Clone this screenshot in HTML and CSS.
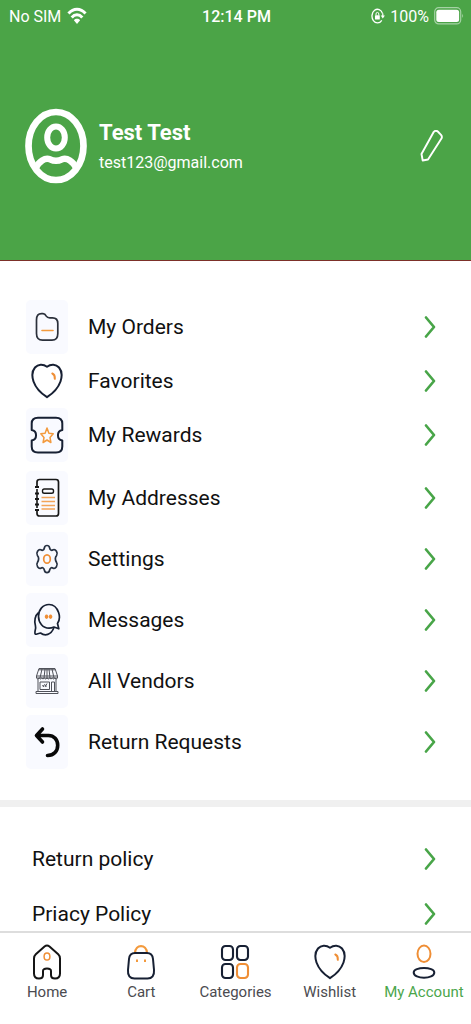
FILE: index.html
```html
<!DOCTYPE html>
<html lang="en">
<head>
<meta charset="utf-8">
<meta name="viewport" content="width=device-width, initial-scale=1">
<title>My Account</title>
<link rel="stylesheet" href="styles.css">
</head>
<body>
<svg class="defs" aria-hidden="true">
  <symbol id="chevron" viewBox="0 0 14 26"><path d="M3 3.500L11 13L3 22.500" fill="none" stroke="#48a548" stroke-width="2.700" stroke-linecap="round" stroke-linejoin="round"/></symbol>
  <symbol id="heart" viewBox="0 0 32 36"><path d="M16 3.800C12 .8 7 1.200 4 4.500C.8 8.300 1 14 2.500 18.500C5 25.500 11 31 16 34.200C21 31 27 25.500 29.500 18.500C31 14 31.200 8.300 28 4.500C25 1.200 20 .8 16 3.800Z" fill="none" stroke="#172033" stroke-width="2" stroke-linejoin="round"/><path d="M21.300 10.500C23.100 11.300 24 13.500 23.800 15.800" fill="none" stroke="#ef8e35" stroke-width="2" stroke-linecap="round"/></symbol>
</svg>
<header class="header">
  <div class="status">
    <div class="status-side">
      <span>No SIM</span>
      <svg class="wifi" viewBox="0 0 20 18" width="20" height="18"><g fill="none" stroke="#fff" stroke-width="3"><path d="M1.500 6.500C6.500.8 13.500.8 18.500 6.500"/><path d="M4.700 10.400C7.800 7 12.200 7 15.300 10.400"/></g><path d="M6.900 13.200C8.500 11.300 11.500 11.300 13.100 13.200L10 17Z" fill="#fff"/></svg>
    </div>
    <time class="clock">12:14 PM</time>
    <div class="status-side status-end">
      <svg viewBox="0 0 14 16" width="14" height="16"><path d="M10.800 12.300A5.500 6.800 0 1 1 11.600 5.600" fill="none" stroke="#fff" stroke-width="1.300"/><path d="M11.800 5.500V8.400" stroke="#fff" stroke-width="1.200"/><path d="M9.700 7.500H13.900L11.800 10.600Z" fill="#fff"/><rect x="4" y="7.200" width="4.800" height="4.400" rx=".6" fill="#fff"/><path d="M5 7.400V6A1.400 1.600 0 0 1 7.800 6V7.400" fill="none" stroke="#fff"/></svg>
      <span>100%</span>
      <svg class="battery" viewBox="0 0 30 18" width="30" height="18"><rect x=".7" y=".7" width="26" height="16.200" rx="4" fill="none" stroke="#a5d2a5" stroke-width="1.200"/><rect x="2.300" y="2.700" width="22.800" height="12.200" rx="2.500" fill="#fff"/><path d="M28.200 6.500Q30 8.800 28.200 11Z" fill="#a5d2a5"/></svg>
    </div>
  </div>
  <div class="profile">
    <svg class="avatar" viewBox="0 0 62 76" width="62" height="76"><g fill="none" stroke="#fff"><ellipse cx="31" cy="38" rx="27.500" ry="34" stroke-width="6.700"/><ellipse cx="31" cy="29.500" rx="8.800" ry="11" stroke-width="6"/><path d="M10.500 60.500C14 53 20 49.500 25 51.300C29 53.300 33 53.300 37 51.300C42 49.500 48 53 51.500 60.500" stroke-width="6.500"/></g></svg>
    <div class="who">
      <h1 class="name">Test Test</h1>
      <p class="email">test123@gmail.com</p>
    </div>
    <button class="edit" type="button" aria-label="Edit profile"><svg viewBox="0 0 24 32" width="24" height="32"><path d="M13.800 1.800Q15.700-.1 17.800 1.500L21 4.800Q22.600 6.700 21.300 8.800L8 29.500L2.700 30.500L1.500 24L13.800 1.800Z" fill="none" stroke="#fff" stroke-width="1.900" stroke-linejoin="round"/></svg></button>
  </div>
</header>
<main>
  <ul class="menu">
    <li><a class="row" href="#orders"><span class="tile"><svg viewBox="0 0 24 30" width="24" height="30"><path d="M1.500 8C1.500 3.500 3.500 1.700 6.500 1.700H8C10 1.700 10.500 2.700 11.300 4.200C12.200 5.800 13 5.900 14.800 5.900H17.500C21 5.900 22.800 7.800 22.800 11.500V21.500C22.800 26 21 28.200 17 28.200H7.500C3.500 28.200 1.500 26 1.500 21.500Z" fill="none" stroke="#2b303b" stroke-width="1.700"/><path d="M7 18.500H18" stroke="#f39a3d" stroke-width="1.600" stroke-linecap="round"/></svg></span><span class="label">My Orders</span><svg class="go"><use href="#chevron"/></svg></a></li>
    <li><a class="row" href="#favorites"><span class="tile tile-plain"><svg width="32" height="36"><use href="#heart"/></svg></span><span class="label">Favorites</span><svg class="go"><use href="#chevron"/></svg></a></li>
    <li class="group-end"><a class="row" href="#rewards"><span class="tile"><svg viewBox="0 0 34 38" width="34" height="38"><path d="M1.700 14V7.500C1.700 3.500 4 1.700 8 1.700H26C30 1.700 32.300 3.500 32.300 7.500V14C26.500 15 26.500 23.500 32.300 24.500V30.500C32.300 34.500 30 36.500 26 36.500H8C4 36.500 1.700 34.500 1.700 30.500V24.500C7.500 23.500 7.500 15 1.700 14Z" fill="none" stroke="#172033" stroke-width="2" stroke-linejoin="round"/><path d="M17 12L18.900 17.200L23.200 17.800L20 21.500L20.900 26.500L17 24L13.100 26.500L14 21.500L10.800 17.800L15.100 17.200Z" fill="none" stroke="#f39a3d" stroke-width="1.500" stroke-linejoin="round"/></svg></span><span class="label">My Rewards</span><svg class="go"><use href="#chevron"/></svg></a></li>
    <li><a class="row" href="#addresses"><span class="tile"><svg viewBox="0 0 26 40" width="26" height="40"><path d="M3 8V4Q3 1.500 5.500 1.500H22Q24.500 1.500 24.500 4V35.500Q24.500 38 22 38H5.500Q3 38 3 35.500V33" fill="none" stroke="#171717" stroke-width="1.700"/><path d="M3 11V30" stroke="#171717" stroke-width="1.600"/><path d="M1 9H5M1 15.500H5M1 21H5M1 26.500H5M1 32H5" stroke="#171717" stroke-width="2"/><rect x="8.500" y="11" width="11" height="4.200" rx="1.800" fill="none" stroke="#171717" stroke-width="1.400"/><path d="M7.500 19.500H21M7.500 23.500H21M7.500 27.500H21M7.500 31H21" stroke="#f3a458" stroke-width="1.400"/></svg></span><span class="label">My Addresses</span><svg class="go"><use href="#chevron"/></svg></a></li>
    <li><a class="row" href="#settings"><span class="tile"><svg viewBox="0 0 24 30" width="24" height="30"><path d="M9.500 3.500C10 .8 14 .8 14.500 3.500C15 6.300 16.500 6.800 18.200 5.800C20.500 4.700 23.400 9 21.600 11.500C20 13.500 20 16 21.600 18.500C23.400 21 20.500 25.300 18.200 24.200C16.500 23.200 15 23.700 14.500 26.500C14 29.200 10 29.200 9.500 26.500C9 23.700 7.500 23.200 5.800 24.200C3.500 25.300 .6 21 2.400 18.500C4 16 4 13.500 2.400 11.500C.6 9 3.500 4.700 5.800 5.800C7.500 6.800 9 6.300 9.500 3.500Z" fill="none" stroke="#263041" stroke-width="1.700"/><ellipse cx="12" cy="15" rx="3.300" ry="4.200" fill="none" stroke="#ef8e35" stroke-width="1.700"/></svg></span><span class="label">Settings</span><svg class="go"><use href="#chevron"/></svg></a></li>
    <li><a class="row" href="#messages"><span class="tile"><svg viewBox="0 0 28 34" width="28" height="34"><g fill="none" stroke="#172033" stroke-width="1.700" stroke-linejoin="round"><path d="M24.500 20.500C26.500 17.500 26.800 13 25.600 9.500C23.800 4.300 20 1.500 16 1.500C10 1.500 5.500 6.700 5.500 13.300C5.500 20 10 25.200 16 25.200C18 25.200 19.500 24.700 21 24L25.800 25.800Z"/><path d="M5.700 9.500C2 12.500 1 18 2.400 22.500C3 24.300 2.900 25.500 2 28.500C1.600 31 2.200 31.600 4 31L7.500 30C12 33.300 18 32.200 21 24.500"/></g><path d="M13.500 11.500a1.800 2.200 0 1 0 .1 0zM17.500 11.500a1.800 2.200 0 1 0 .1 0z" fill="#ef8e35"/></svg></span><span class="label">Messages</span><svg class="go"><use href="#chevron"/></svg></a></li>
    <li><a class="row" href="#vendors"><span class="tile"><svg viewBox="0 0 24 28" width="24" height="28"><g fill="none" stroke="#50525a" stroke-width="1"><path d="M4 1.500H20L22.500 9V11H1.500V9ZM3.500 2.800H20.500M1.500 9H22.500M7 2L5 11M10 2L9 11M14 2L15 11M17 2L19 11M12 2V11"/><path d="M1.500 11q1.300 2 2.600 0q1.300 2 2.600 0q1.300 2 2.600 0q1.300 2 2.700 0q1.300 2 2.700 0q1.300 2 2.600 0q1.300 2 2.600 0q1.300 2 2.600 0M3 12V24.500M21 12V24.500M1 24.500H23V26.500H1ZM5 15H14.500V22.500H5ZM16.500 24V15H19.500V24M8 20L9.500 17.500M10 20L12 16.500M7.500 18L8.500 19.500M9.800 17.500L11.500 19.500"/></g></svg></span><span class="label">All Vendors</span><svg class="go"><use href="#chevron"/></svg></a></li>
    <li><a class="row" href="#returns"><span class="tile"><svg viewBox="0 0 26 32" width="26" height="32"><path d="M8.500 3L2.500 9.500L8.500 16M3 9.500H14.500C20 9.500 23.700 13.800 23.700 19.200C23.700 25 20 29.500 13.500 29.500" fill="none" stroke="#080808" stroke-width="3.600" stroke-linecap="round" stroke-linejoin="round"/></svg></span><span class="label">Return Requests</span><svg class="go"><use href="#chevron"/></svg></a></li>
  </ul>
  <ul class="policies">
    <li><a class="row" href="#return-policy"><span class="label">Return policy</span><svg class="go"><use href="#chevron"/></svg></a></li>
    <li><a class="row" href="#privacy"><span class="label">Priacy Policy</span><svg class="go"><use href="#chevron"/></svg></a></li>
  </ul>
</main>
<nav class="tabs">
  <a class="tab" href="#home"><svg viewBox="0 0 30 36" width="30" height="36"><path d="M2 14.500Q2 12 3.800 10.300L12.500 2.500Q15 .5 17.500 2.500L26.200 10.300Q28 12 28 14.500V29.500Q28 34.500 23 34.500Q19 34.500 19 31V27Q19 24.500 15 24.500Q11 24.500 11 27V31Q11 34.500 7 34.500Q2 34.500 2 29.500Z" fill="none" stroke="#151515" stroke-width="2"/><ellipse cx="15" cy="12.500" rx="2.900" ry="3.600" fill="none" stroke="#ef8e35" stroke-width="1.500"/></svg><span>Home</span></a>
  <a class="tab" href="#cart"><svg viewBox="0 0 30 36" width="30" height="36"><path d="M9 9C9.500-.3 20.500-.3 21 9" fill="none" stroke="#f39a3d" stroke-width="2.200"/><path d="M9 9H21C25 9 26.600 11 27 15L28 26C28.500 31.500 26 34.500 21.500 34.500H8.500C4 34.500 1.500 31.500 2 26L3 15C3.400 11 5 9 9 9Z" fill="none" stroke="#172033" stroke-width="2"/><path d="M11 15.500V18M19 15.500V18" stroke="#f39a3d" stroke-width="2"/></svg><span>Cart</span></a>
  <a class="tab" href="#categories"><svg viewBox="0 0 30 36" width="30" height="36"><g fill="none" stroke="#172033" stroke-width="2.100"><rect x="2" y="2" width="11" height="14" rx="3.500"/><rect x="17" y="2" width="11" height="14" rx="3.500"/><rect x="2" y="20" width="11" height="14" rx="3.500"/><rect x="17" y="20" width="11" height="14" rx="3.500" stroke="#ef8e35"/></g></svg><span>Categories</span></a>
  <a class="tab" href="#wishlist"><svg width="32" height="36"><use href="#heart"/></svg><span>Wishlist</span></a>
  <a class="tab tab-current" href="#account" aria-current="page"><svg viewBox="0 0 30 36" width="30" height="36"><ellipse cx="15" cy="9.800" rx="6.500" ry="8.200" fill="none" stroke="#ef8e35" stroke-width="2"/><path d="M4.700 28.500C4.700 22.500 25.300 22.500 25.300 28.500C25.300 35.500 4.700 35.500 4.700 28.500Z" fill="none" stroke="#172033" stroke-width="2"/></svg><span>My Account</span></a>
</nav>
</body>
</html>
```
FILE: styles.css
```css
* {
  box-sizing: border-box;
}

body {
  margin: 0;
  background: #fff;
  color: #111;
  font-family: Roboto, "Liberation Sans", sans-serif;
}

a {
  color: inherit;
  text-decoration: none;
}

ul {
  margin: 0;
  padding: 0;
  list-style: none;
}

svg {
  display: block;
  flex: none;
}

.defs {
  position: absolute;
  width: 0;
  height: 0;
}

.header {
  background: #4ba447;
  color: #fff;
  border-bottom: 1px solid #7c3029;
}

.status {
  display: grid;
  grid-template-columns: 1fr auto 1fr;
  align-items: center;
  height: 32px;
  padding: 0 7px 0 9px;
  font-size: 16px;
}

.status-side {
  display: flex;
  align-items: center;
  gap: 6px;
}

.status-end {
  justify-content: flex-end;
  gap: 5px;
}

.clock {
  font-weight: 500;
}

.profile {
  display: flex;
  align-items: center;
  padding: 76px 27px 76px 25px;
}

.who {
  flex: 1;
  margin-left: 12px;
  padding-top: 2px;
}

.name {
  margin: 0;
  font-size: 22px;
  line-height: 32px;
  font-weight: 700;
}

.email {
  margin: 0;
  font-size: 16px;
  line-height: 28px;
}

.edit {
  padding: 0;
  border: 0;
  background: none;
}

.menu {
  padding: 39px 34px 31px 26px;
}

.menu .row {
  min-height: 54px;
}

.menu .group-end {
  padding-bottom: 9px;
}

.menu .group-end ~ li + li {
  margin-top: 7px;
}

.row {
  display: flex;
  align-items: center;
  font-size: 21px;
}

.tile {
  display: flex;
  align-items: center;
  justify-content: center;
  width: 42px;
  height: 54px;
  margin-right: 20px;
  border-radius: 5px;
  background: #f9faff;
}

.tile-plain {
  background: none;
}

.label {
  flex: 1;
}

.go {
  width: 14px;
  height: 26px;
}

.policies {
  padding: 24px 34px 94px 32px;
  border-top: 7px solid #f0f0f0;
}

.policies .row {
  min-height: 55px;
}

.tabs {
  position: fixed;
  right: 0;
  bottom: 0;
  left: 0;
  display: grid;
  grid-template-columns: repeat(5, 1fr);
  padding: 11px 0 20px;
  border-top: 2px solid #ddd;
  background: #fff;
}

.tab {
  display: flex;
  flex-direction: column;
  align-items: center;
  color: #4b4b50;
  font-size: 15px;
  line-height: 24px;
  white-space: nowrap;
}

.tab-current {
  color: #4ba64c;
}
```
